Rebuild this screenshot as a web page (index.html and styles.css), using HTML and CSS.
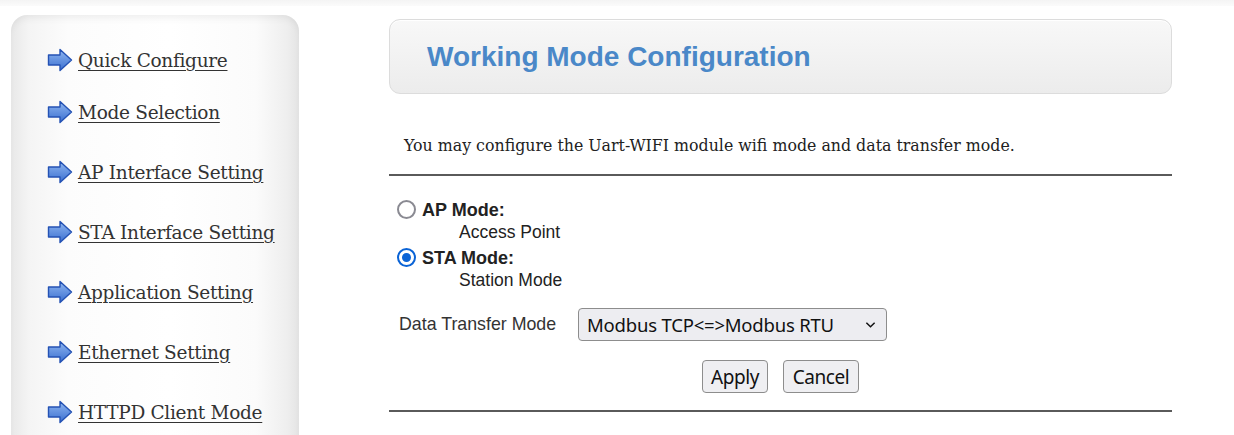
FILE: index.html
```html
<!DOCTYPE html>
<html>
<head>
<meta charset="utf-8">
<link rel="stylesheet" href="styles.css">
</head>
<body>
<div class="topstrip"></div>
<div class="page">
  <nav class="sidebar">
    <ul class="menu">
      <li class="item first"><svg class="arrow" viewBox="0 0 26 24"><defs><linearGradient id="g1" x1="0" y1="0" x2="0" y2="1"><stop offset="0" stop-color="#8fb6f0"/><stop offset="1" stop-color="#3a6fd0"/></linearGradient></defs><path d="M1.5 7 H13 V1.5 L24.5 12 L13 22.5 V17 H1.5 Z" fill="url(#g1)" stroke="#2452b4" stroke-width="1.4" stroke-linejoin="round"/></svg><a href="#">Quick Configure</a></li>
      <li class="item"><svg class="arrow" viewBox="0 0 26 24"><path d="M1.5 7 H13 V1.5 L24.5 12 L13 22.5 V17 H1.5 Z" fill="url(#g1)" stroke="#2452b4" stroke-width="1.4" stroke-linejoin="round"/></svg><a href="#">Mode Selection</a></li>
      <li class="item"><svg class="arrow" viewBox="0 0 26 24"><path d="M1.5 7 H13 V1.5 L24.5 12 L13 22.5 V17 H1.5 Z" fill="url(#g1)" stroke="#2452b4" stroke-width="1.4" stroke-linejoin="round"/></svg><a href="#">AP Interface Setting</a></li>
      <li class="item"><svg class="arrow" viewBox="0 0 26 24"><path d="M1.5 7 H13 V1.5 L24.5 12 L13 22.5 V17 H1.5 Z" fill="url(#g1)" stroke="#2452b4" stroke-width="1.4" stroke-linejoin="round"/></svg><a href="#">STA Interface Setting</a></li>
      <li class="item"><svg class="arrow" viewBox="0 0 26 24"><path d="M1.5 7 H13 V1.5 L24.5 12 L13 22.5 V17 H1.5 Z" fill="url(#g1)" stroke="#2452b4" stroke-width="1.4" stroke-linejoin="round"/></svg><a href="#">Application Setting</a></li>
      <li class="item"><svg class="arrow" viewBox="0 0 26 24"><path d="M1.5 7 H13 V1.5 L24.5 12 L13 22.5 V17 H1.5 Z" fill="url(#g1)" stroke="#2452b4" stroke-width="1.4" stroke-linejoin="round"/></svg><a href="#">Ethernet Setting</a></li>
      <li class="item last"><svg class="arrow" viewBox="0 0 26 24"><path d="M1.5 7 H13 V1.5 L24.5 12 L13 22.5 V17 H1.5 Z" fill="url(#g1)" stroke="#2452b4" stroke-width="1.4" stroke-linejoin="round"/></svg><a href="#">HTTPD Client Mode</a></li>
    </ul>
  </nav>
  <main class="content">
    <div class="titlebox"><h1>Working Mode Configuration</h1></div>
    <p class="desc">You may configure the Uart-WIFI module wifi mode and data transfer mode.</p>
    <hr class="rule">
    <form class="form">
      <label class="mode">
        <span class="radio"></span>
        <span class="modetext"><b>AP Mode:</b><span class="sub">Access Point</span></span>
      </label>
      <label class="mode">
        <span class="radio checked"></span>
        <span class="modetext"><b>STA Mode:</b><span class="sub">Station Mode</span></span>
      </label>
      <div class="transfer">
        <span class="tlabel">Data Transfer Mode</span>
        <div class="select">Modbus TCP&lt;=&gt;Modbus RTU<svg class="chev" viewBox="0 0 12 8"><path d="M1.5 1.5 L6 6 L10.5 1.5" fill="none" stroke="#111" stroke-width="1.6"/></svg></div>
      </div>
      <div class="buttons">
        <button type="button" class="btn apply">Apply</button>
        <button type="button" class="btn cancel">Cancel</button>
      </div>
    </form>
    <hr class="rule bottom">
  </main>
</div>
</body>
</html>
```
FILE: styles.css
```css
html, body {
  margin: 0;
  padding: 0;
  background: #fff;
  width: 1234px;
  height: 435px;
  overflow: hidden;
}
.topstrip {
  height: 6px;
  background: linear-gradient(#f4f4f4, #fbfbfb);
}
.page {
  display: flex;
  align-items: flex-start;
  height: 429px;
  overflow: hidden;
}
.sidebar {
  margin-left: 11px;
  margin-top: 9px;
  width: 288px;
  height: 420px;
  border-radius: 16px 16px 0 0;
  background: linear-gradient(90deg, #e8e8e8 0%, #f4f4f4 6%, #fcfcfc 20%, #ffffff 55%, #fbfbfb 85%, #eeeeee 96%, #e4e4e4 100%);
  box-shadow: inset 0 6px 8px -4px rgba(0,0,0,0.08);
}
.menu {
  list-style: none;
  margin: 0;
  padding: 32px 0 0 36px;
  display: flex;
  flex-direction: column;
}
.item {
  display: flex;
  align-items: center;
  height: 26px;
  margin-bottom: 34px;
}
.item.first {
  margin-bottom: 26px;
}
.item.last {
  margin-bottom: 0;
}
.arrow {
  width: 26px;
  height: 24px;
  margin-right: 5px;
  flex: none;
}
.item a {
  font-family: "DejaVu Serif", Georgia, serif;
  font-size: 18.5px;
  color: #333;
  text-decoration: underline;
  text-underline-offset: 3px;
  text-decoration-thickness: 1px;
  letter-spacing: -0.3px;
}
.content {
  margin-left: 90px;
  margin-top: 13px;
  width: 783px;
}
.titlebox {
  box-sizing: border-box;
  height: 75px;
  border: 1px solid #dcdcdc;
  border-radius: 11px;
  background: linear-gradient(#f8f8f8, #ececec);
  box-shadow: inset 0 1px 0 #fff;
  display: flex;
  align-items: center;
  padding-left: 37px;
}
.titlebox h1 {
  margin: 0;
  font-family: "Liberation Sans", Arial, sans-serif;
  font-size: 28px;
  font-weight: bold;
  color: #4a88c8;
}
.desc {
  box-sizing: border-box;
  margin: 0;
  padding: 42px 0 0 15px;
  height: 80px;
  line-height: 20px;
  font-family: "DejaVu Serif", Georgia, serif;
  font-size: 15.8px;
  color: #222;
  letter-spacing: 0;
}
.rule {
  margin: 0;
  border: 0;
  border-top: 2px solid #5a5a5a;
  height: 0;
}
.rule.bottom {
  margin-top: 17px;
}
.form {
  padding-top: 23px;
  font-family: "Liberation Sans", Arial, sans-serif;
  font-size: 18px;
  color: #222;
}
.mode {
  display: flex;
  align-items: flex-start;
  margin-left: 8px;
}
.mode + .mode {
  margin-top: 4px;
}
.radio {
  width: 15px;
  height: 15px;
  border: 2px solid #8a8a92;
  border-radius: 50%;
  box-sizing: content-box;
  margin-right: 6px;
  margin-top: 1px;
  flex: none;
  display: flex;
  align-items: center;
  justify-content: center;
}
.radio.checked {
  border-color: #0a63d6;
}
.radio.checked::after {
  content: "";
  width: 9px;
  height: 9px;
  border-radius: 50%;
  background: #0a63d6;
}
.modetext {
  display: flex;
  flex-direction: column;
  line-height: 22px;
}
.modetext b {
  font-weight: bold;
  font-size: 18px;
}
.sub {
  padding-left: 37px;
  color: #222;
  font-size: 17.5px;
}
.transfer {
  display: flex;
  align-items: center;
  margin-top: 17px;
  margin-left: 10px;
}
.tlabel {
  color: #333;
  width: 179px;
  font-size: 17.8px;
}
.select {
  box-sizing: border-box;
  width: 309px;
  height: 33px;
  border: 1px solid #8d8d8d;
  border-radius: 4px;
  background: #ededf1;
  font-family: "Noto Sans", "Open Sans", sans-serif;
  font-size: 18.5px;
  color: #111;
  display: flex;
  align-items: center;
  padding-left: 8px;
  padding-right: 10px;
  justify-content: space-between;
  letter-spacing: -0.2px;
}
.chev {
  width: 11px;
  height: 8px;
}
.buttons {
  display: flex;
  margin-top: 19px;
  margin-left: 313px;
  gap: 15px;
}
.btn {
  box-sizing: border-box;
  height: 33px;
  padding: 0;
  border: 1px solid #8d8d8d;
  border-radius: 4px;
  background: #efeff2;
  font-family: "Noto Sans", "Open Sans", sans-serif;
  font-size: 19px;
  color: #111;
  letter-spacing: -0.4px;
}
.btn.apply {
  width: 66px;
}
.btn.cancel {
  width: 76px;
}
```
